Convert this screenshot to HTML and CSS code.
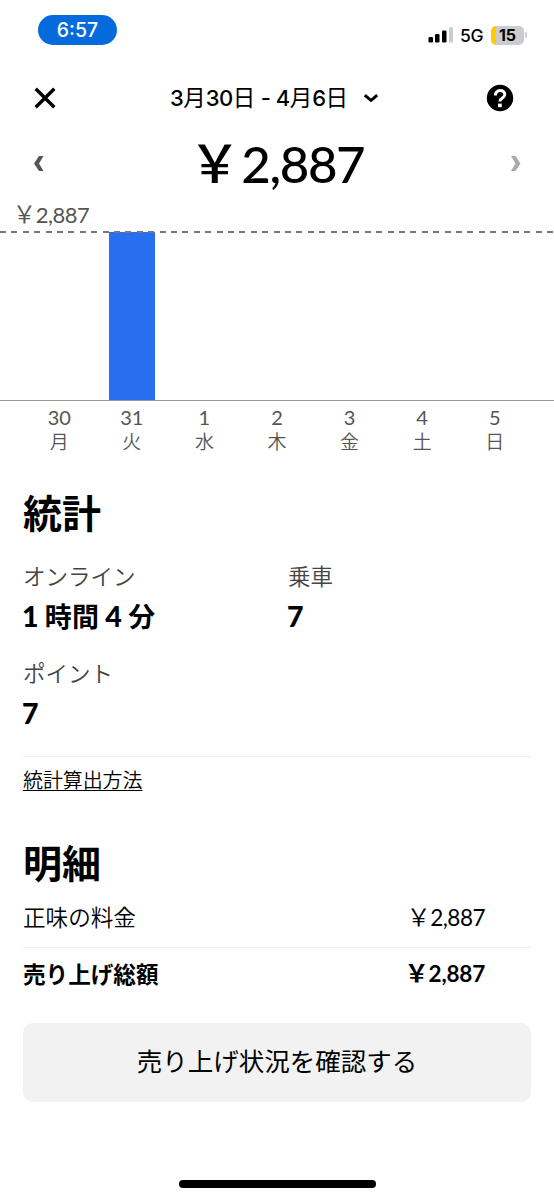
FILE: index.html
```html
<!DOCTYPE html>
<html lang="ja">
<head>
<meta charset="utf-8">
<title>売り上げ</title>
<link rel="stylesheet" href="styles.css">
</head>
<body>
<div class="status">
  <span class="clock">6:57</span>
  <div class="status-right">
    <svg class="signal" width="26" height="18" viewBox="0 0 26 18"><rect x="0.5" y="11" width="4.5" height="5.5" rx="1.3"/><rect x="7" y="8" width="4.5" height="8.5" rx="1.3"/><rect x="14" y="4.5" width="4.5" height="12" rx="1.3"/><rect x="21" y="1" width="4" height="15.5" rx="1.3" fill="#ccc"/></svg>
    <span class="network">5G</span>
    <span class="battery">15</span>
    <i class="battery-tip"></i>
  </div>
</div>
<header class="header">
  <svg class="close" width="24" height="24" viewBox="0 0 24 24"><path d="M2.7 2.7l18.6 18.6M21.3 2.7L2.7 21.3" stroke="#000" stroke-width="3.4"/></svg>
  <div class="period"><span class="dates"><b>3</b>月<b>30</b>日<b> - 4</b>月<b>6</b>日</span><svg width="14" height="9" viewBox="0 0 14 9"><path d="M.8 1.2L7 6.3l6.2-5.1" fill="none" stroke="#000" stroke-width="2.9"/></svg></div>
  <svg class="help" width="28" height="28" viewBox="0 0 28 28"><circle cx="14" cy="14" r="13.2"/><path d="M9.4 11.5c0-3 1.9-4.9 4.8-4.9 2.7 0 4.6 1.6 4.6 4 0 3.5-4.9 3.1-4.9 6.8" fill="none" stroke="#fff" stroke-width="3"/><rect x="12" y="19.6" width="3.8" height="3.6" fill="#fff"/></svg>
</header>
<div class="total">
  <svg width="10" height="16" viewBox="0 0 10 16"><path d="M9.5 0H5L0 7.5 5 15h4.5L5 7.5z" fill="#555"/></svg>
  <span class="total-value"><span class="yen">￥</span>2,887</span>
  <svg width="10" height="16" viewBox="0 0 10 16"><path d="M0 0h4.5l5 7.5-5 7.5H0l4.5-7.5z" fill="#aaa"/></svg>
</div>
<section class="chart">
  <div class="max-label"><span class="yen">￥</span>2,887</div>
  <div class="plot">
    <div class="bar"></div>
    <div class="dash"></div>
  </div>
  <div class="days">
    <div><b>30</b><span>月</span></div>
    <div><b>31</b><span>火</span></div>
    <div><b>1</b><span>水</span></div>
    <div><b>2</b><span>木</span></div>
    <div><b>3</b><span>金</span></div>
    <div><b>4</b><span>土</span></div>
    <div><b>5</b><span>日</span></div>
  </div>
</section>
<main class="content">
  <h2 class="heading">統計</h2>
  <div class="stats">
    <div class="stat"><span class="stat-name">オンライン</span><span class="stat-value"><span class="num">1</span> 時間 <span class="num">4</span> 分</span></div>
    <div class="stat"><span class="stat-name">乗車</span><span class="stat-value"><span class="num">7</span></span></div>
    <div class="stat"><span class="stat-name">ポイント</span><span class="stat-value"><span class="num">7</span></span></div>
  </div>
  <div class="method"><a class="link">統計算出方法</a></div>
  <h2 class="heading details">明細</h2>
  <div class="row"><span>正味の料金</span><span class="amount"><span class="yen">￥</span>2,887</span></div>
  <div class="row sum"><span>売り上げ総額</span><span class="amount"><span class="yen">￥</span>2,887</span></div>
  <button class="check">売り上げ状況を確認する</button>
</main>
<div class="home"></div>
</body>
</html>
```
FILE: styles.css
```css
* { box-sizing: border-box; }
body {
  margin: 0;
  width: 554px;
  height: 1199px;
  overflow: hidden;
  display: flex;
  flex-direction: column;
  background: #fff;
  color: #000;
  font-family: "Noto Sans CJK JP", sans-serif;
}
svg { display: block; flex: none; }
.yen { font-family: "Noto Sans CJK JP", sans-serif; font-size: 1.08em; line-height: 1; margin: 0 0 0 -.06em; }
.status {
  height: 62px;
  flex: none;
  display: flex;
  justify-content: space-between;
  align-items: flex-start;
  padding: 15px 27px 0 38px;
}
.clock {
  width: 79px;
  height: 30px;
  border-radius: 15px;
  background: #056bdd;
  color: #fff;
  font: 450 19.5px/31px Inter, sans-serif;
  text-align: center;
}
.status-right { display: flex; align-items: center; height: 20px; margin-top: 10px; }
.network { width: 24px; margin: 0 7px 0 6px; font: 500 17.5px/20px Inter, sans-serif; letter-spacing: -.2px; padding-top: 2px; }
.battery {
  width: 33px;
  height: 19px;
  border-radius: 5px;
  background: linear-gradient(90deg, #fc0 5px, #ccc 5px);
  font: 700 16px/19px Inter, sans-serif;
  text-align: center;
}
.battery-tip { width: 2px; height: 6px; margin-left: 1px; border-radius: 0 2px 2px 0; background: #ccc; }
.header {
  height: 72px;
  flex: none;
  display: flex;
  justify-content: space-between;
  align-items: center;
  padding: 0 40px 0 33px;
}
.period {
  display: flex;
  align-items: center;
  gap: 16px;
  margin-left: 5px;
  font: 400 22.5px/32px "Noto Sans CJK JP", sans-serif;
}
.dates { margin-top: -2px; }
.period b { font-family: Inter, sans-serif; font-weight: 450; font-size: 22px; letter-spacing: -.5px; }
.total {
  height: 60px;
  flex: none;
  display: flex;
  justify-content: space-between;
  align-items: center;
  padding: 0 33px 0 34px;
}
.total-value { font: 500 51px/60px Lato, sans-serif; letter-spacing: -1.4px; margin-left: 5px; }
.total-value .yen { font-size: 52px; font-weight: 500; margin: 0 2px 0 -7px; }
.chart { height: 272px; flex: none; }
.max-label { height: 37px; padding: 5px 0 0 14px; font: 400 22px/32px Lato, sans-serif; letter-spacing: -.5px; color: #555; }
.max-label .yen, .row .yen { font-weight: 350; }
.plot { display: flow-root; position: relative; height: 170px; border-bottom: 1px solid #999; }
.bar { width: 46px; height: 168px; margin: 1px 0 0 109px; background: #286ef0; }
.dash {
  position: absolute;
  inset: 0 0 auto;
  height: 2px;
  background: repeating-linear-gradient(90deg, #777 0 6px, transparent 6px 11.4px);
}
.days { display: grid; grid-template-columns: repeat(7, 1fr); padding: 5px 23px 0; color: #555; text-align: center; }
.days div { display: flex; flex-direction: column; }
.days b { font: 400 20px/23px Lato, sans-serif; }
.days span { font-size: 19px; line-height: 23px; font-weight: 350; }
.content { padding: 16px 23px 0; flex: 1; }
.heading { margin: 0; font-size: 39px; line-height: 58px; font-weight: 700; }
.stats {
  display: grid;
  grid-template-columns: 265px 1fr;
  row-gap: 17px;
  padding-top: 17px;
  height: 217px;
  border-bottom: 1px solid #eee;
  align-content: start;
}
.stat { display: flex; flex-direction: column; height: 80px; }
.stat-name { font-size: 22.5px; line-height: 36px; font-weight: 350; color: #444; }
.stat-value { margin-left: -1px; font-size: 27px; line-height: 46px; font-weight: 700; white-space: pre; letter-spacing: .1px; }
.num { font-family: Lato, sans-serif; font-weight: 900; font-size: 28.5px; }
.method { height: 75px; padding-top: 7px; font-size: 20px; line-height: 32px; font-weight: 350; letter-spacing: -.1px; }
.link { text-decoration: underline; text-decoration-thickness: 1px; text-underline-offset: 2px; }
.row {
  height: 58px;
  display: flex;
  justify-content: space-between;
  align-items: center;
  padding: 0 46px 5px 0;
  border-bottom: 1px solid #eee;
  font-size: 22.6px;
  font-weight: 350;
}
.amount { font-family: Lato, sans-serif; font-size: 22.5px; font-weight: 400; padding-top: 3px; letter-spacing: -.5px; }
.sum { border: 0; font-weight: 700; height: 53px; padding-bottom: 0; }
.sum > span { margin-top: -2px; }
.sum .amount { letter-spacing: -.2px; padding-top: 0; }
.sum .amount, .sum .yen { font-weight: 700; }
.check {
  display: block;
  width: 508px;
  height: 79px;
  margin-top: 22px;
  padding: 0 0 5px;
  border: 0;
  border-radius: 10px;
  background: #f2f2f2;
  color: #000;
  font: 400 25.5px/74px "Noto Sans CJK JP", sans-serif;
}
.home { width: 197px; height: 8px; flex: none; margin: 0 0 11px 179px; border-radius: 4px; background: #000; }
```
